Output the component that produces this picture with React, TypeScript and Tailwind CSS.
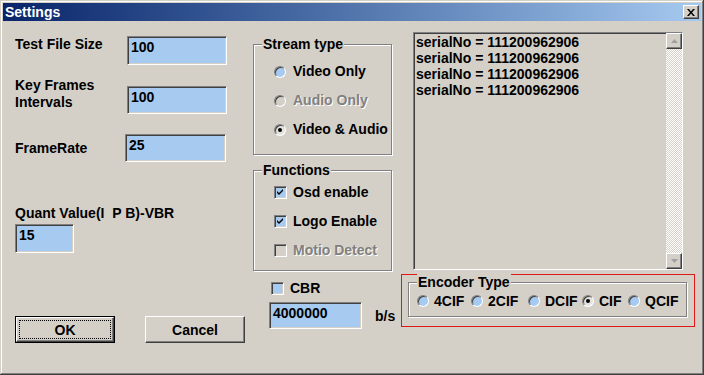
import React from 'react';

const face = 'bg-[#d4d0c8]';
const sunken =
    'border border-t-[#808080] border-l-[#808080] border-r-white border-b-white shadow-[inset_1px_1px_0_#404040,inset_-1px_-1px_0_#d4d0c8]';
const raised =
    'border border-t-white border-l-white border-r-[#404040] border-b-[#404040] shadow-[inset_-1px_-1px_0_#808080]';
const etched = 'relative border border-[#808080] shadow-[1px_1px_0_#ffffff,inset_1px_1px_0_#ffffff]';
const disabledText = 'text-[#808080] [text-shadow:1px_1px_0_#ffffff]';

function TextBox({ value, className }: { value: string; className: string }) {
    return <div className={`${sunken} bg-[#a6caf0] pl-[3px] pt-[2px] leading-4 ${className}`}>{value}</div>;
}

function Radio({ checked, disabled, grey }: { checked?: boolean; disabled?: boolean; grey?: boolean }) {
    const fill = disabled ? 'bg-[#d4d0c8]' : grey ? 'bg-[#e4e2de]' : 'bg-[#a6caf0]';
    return (
        <span
            className={`relative w-3 h-3 shrink-0 rounded-full border border-t-[#808080] border-l-[#808080] border-r-white border-b-white shadow-[inset_1px_1px_0_#404040] ${fill} flex items-center justify-center`}
        >
            {checked && <span className="w-1 h-1 rounded-full bg-black" />}
        </span>
    );
}

function Check({ checked, disabled }: { checked?: boolean; disabled?: boolean }) {
    return (
        <span className={`w-[13px] h-[13px] shrink-0 ${sunken} ${disabled ? 'bg-[#d4d0c8]' : 'bg-[#a6caf0]'} flex items-center justify-center`}>
            {checked && (
                <svg width="7" height="7" viewBox="0 0 7 7">
                    <path d="M0 2 L2 4 L6 0 L6 2 L2 6 L0 4 Z" fill="#000" />
                </svg>
            )}
        </span>
    );
}

function Legend({ text }: { text: string }) {
    return <span className={`absolute left-[8px] -top-[9px] px-[1px] leading-4 ${face}`}>{text}</span>;
}

function ScrollArrow({ up }: { up?: boolean }) {
    return (
        <div className={`w-[16px] h-[16px] ${face} ${raised} flex items-center justify-center`}>
            <svg width="7" height="4" viewBox="0 0 7 4">
                <path d={up ? 'M3.5 0 L7 4 L0 4 Z' : 'M0 0 L7 0 L3.5 4 Z'} fill="#a0a0a0" />
            </svg>
        </div>
    );
}

export default function App() {
    const encoders = [
        { label: '4CIF', w: 'w-[54px]' },
        { label: '2CIF', w: 'w-[57px]' },
        { label: 'DCIF', w: 'w-[54px]' },
        { label: 'CIF', w: 'w-[46px]', checked: true },
        { label: 'QCIF', w: 'w-[50px]' },
    ];

    return (
        <div
            className={`w-[704px] h-[375px] ${face} p-[3px] flex flex-col text-[14px] font-bold text-black shadow-[inset_-1px_-1px_0_#404040,inset_1px_1px_0_#d4d0c8,inset_-2px_-2px_0_#808080,inset_2px_2px_0_#ffffff] font-['Liberation_Sans',Arial,sans-serif]`}
        >
            <div className="h-[18px] shrink-0 flex items-center justify-between bg-gradient-to-r from-[#0a246a] to-[#a6caf0] pl-[2px] pr-[2px]">
                <span className="text-white leading-4">Settings</span>
                <div className={`w-[16px] h-[14px] ${face} ${raised} flex items-center justify-center`}>
                    <svg width="8" height="7" viewBox="0 0 8 7">
                        <path d="M0 0 L2 0 L4 2.5 L6 0 L8 0 L5 3.5 L8 7 L6 7 L4 4.5 L2 7 L0 7 L3 3.5 Z" fill="#000" />
                    </svg>
                </div>
            </div>

            <div className="flex flex-1">
                {/* left column */}
                <div className="ml-[12px] w-[238px] flex flex-col">
                    <div className="mt-[15px] flex h-[29px]">
                        <span className="w-[112px] leading-4">Test File Size</span>
                        <TextBox value="100" className="w-[100px] h-[29px]" />
                    </div>
                    <div className="mt-[12px] flex h-[37px]">
                        <span className="w-[112px] leading-[17px]">
                            Key Frames
                            <br />
                            Intervals
                        </span>
                        <TextBox value="100" className="w-[100px] h-[28px] self-end" />
                    </div>
                    <div className="mt-[20px] flex items-center h-[28px]">
                        <span className="w-[110px] leading-4">FrameRate</span>
                        <TextBox value="25" className="w-[101px] h-[28px]" />
                    </div>
                    <span className="mt-[43px] leading-4">Quant Value(I&nbsp;&nbsp;P B)-VBR</span>
                    <TextBox value="15" className="mt-[3px] w-[59px] h-[29px]" />
                    <div className="mt-[63px] flex gap-[30px]">
                        <div className="w-[100px] h-[27px] border border-black">
                            <div className={`w-full h-full ${raised} flex items-center justify-center p-[2px]`}>
                                <div className="w-full h-full border border-dotted border-black flex items-center justify-center leading-4">
                                    OK
                                </div>
                            </div>
                        </div>
                        <div className={`w-[100px] h-[27px] ${raised} flex items-center justify-center leading-4`}>Cancel</div>
                    </div>
                </div>

                {/* middle column */}
                <div className="w-[148px] flex flex-col">
                    <div className={`mt-[23px] w-[139px] h-[111px] ${etched} pl-[20px] pt-[12px]`}>
                        <Legend text="Stream type" />
                        <div className="h-[29px] flex items-center gap-[7px]">
                            <Radio />
                            <span>Video Only</span>
                        </div>
                        <div className="h-[29px] flex items-center gap-[7px]">
                            <Radio disabled />
                            <span className={disabledText}>Audio Only</span>
                        </div>
                        <div className="h-[29px] flex items-center gap-[7px]">
                            <Radio checked grey />
                            <span>Video &amp; Audio</span>
                        </div>
                    </div>

                    <div className={`mt-[15px] w-[139px] h-[101px] ${etched} pl-[20px] pt-[7px]`}>
                        <Legend text="Functions" />
                        <div className="h-[29px] flex items-center gap-[6px]">
                            <Check checked />
                            <span>Osd enable</span>
                        </div>
                        <div className="h-[29px] flex items-center gap-[6px]">
                            <Check checked />
                            <span>Logo Enable</span>
                        </div>
                        <div className="h-[29px] flex items-center gap-[6px]">
                            <Check disabled />
                            <span className={disabledText}>Motio Detect</span>
                        </div>
                    </div>

                    <div className="mt-[9px] h-[16px] pl-[18px] flex items-center gap-[6px]">
                        <Check />
                        <span>CBR</span>
                    </div>
                    <div className="mt-[6px] flex items-center">
                        <TextBox value="4000000" className="ml-[16px] w-[93px] h-[27px]" />
                        <span className="ml-[13px] mt-[1px]">b/s</span>
                    </div>
                </div>

                {/* right column */}
                <div className="flex flex-col">
                    <div className={`mt-[11px] ml-[12px] w-[270px] h-[238px] ${sunken} bg-[#d4d0c8] flex`}>
                        <div className="flex-1 pl-[2px] pt-[1px] leading-4">
                            <div>serialNo = 111200962906</div>
                            <div>serialNo = 111200962906</div>
                            <div>serialNo = 111200962906</div>
                            <div>serialNo = 111200962906</div>
                        </div>
                        <div className="w-[16px] flex flex-col">
                            <ScrollArrow up />
                            <div className="flex-1 bg-[repeating-conic-gradient(#ffffff_0_25%,#d4d0c8_0_50%)] bg-size-[2px_2px]" />
                            <ScrollArrow />
                        </div>
                    </div>

                    <div className="mt-[4px] w-[294px] h-[53px] border border-[#e01818] pl-[6px] pt-[7px]">
                        <div className={`w-[279px] h-[35px] ${etched} pl-[8px] pt-[10px]`}>
                            <Legend text="Encoder Type" />
                            <div className="flex h-[16px] items-center">
                                {encoders.map((e) => (
                                    <div key={e.label} className={`${e.w} flex items-center gap-[5px]`}>
                                        <Radio checked={e.checked} grey={e.checked} />
                                        <span className="leading-4">{e.label}</span>
                                    </div>
                                ))}
                            </div>
                        </div>
                    </div>
                </div>
            </div>
        </div>
    );
}
